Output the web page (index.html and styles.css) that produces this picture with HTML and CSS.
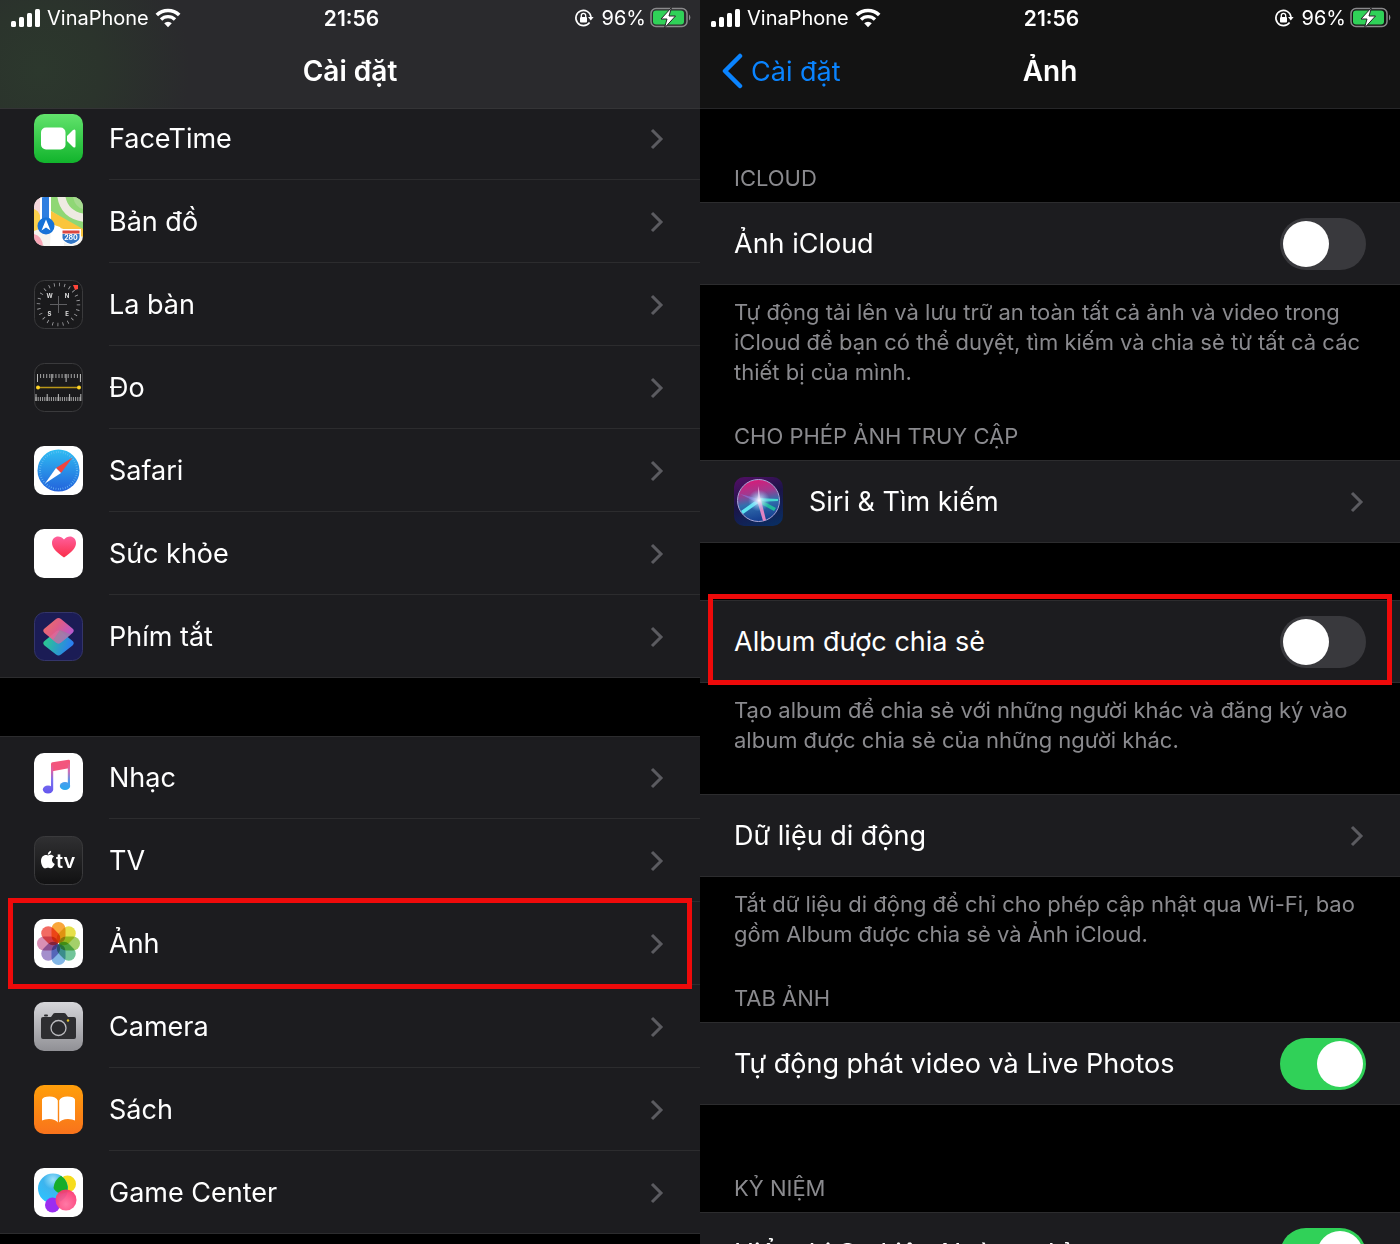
FILE: index.html
```html
<!DOCTYPE html>
<html lang="vi">
<head>
  <meta charset="UTF-8">
  <meta name="viewport" content="width=device-width, initial-scale=1.0">
  <title>Cài đặt - Ảnh</title>
  <link rel="stylesheet" href="styles.css">
</head>
<body>
  <!-- shared symbols -->
  <svg class="defs" width="0" height="0" aria-hidden="true">
    <symbol id="signal" viewBox="0 0 30 20">
      <rect x="0" y="13" width="5" height="6" rx="1.5" fill="#fff"/>
      <rect x="8" y="9" width="5" height="10" rx="1.5" fill="#fff"/>
      <rect x="16" y="5" width="5" height="14" rx="1.5" fill="#fff"/>
      <rect x="24" y="1" width="5" height="18" rx="1.5" fill="#fff"/>
    </symbol>
    <symbol id="wifi" viewBox="0 0 26 20">
      <path d="M1.8 7a16 16 0 0 1 22.4 0" fill="none" stroke="#fff" stroke-width="3.6"/>
      <path d="M6 11.500a10 10 0 0 1 14 0" fill="none" stroke="#fff" stroke-width="3.4"/>
      <path d="M13 19.200l-3.800-4a5.500 5.500 0 0 1 7.600 0z" fill="#fff"/>
    </symbol>
    <symbol id="lock" viewBox="0 0 20 20">
      <path d="M15.600 14.500A7.600 7.600 0 1 1 17 9" fill="none" stroke="#fff" stroke-width="1.6"/>
      <path d="M14 9h5.600l-2.800 3.600z" fill="#fff"/>
      <rect x="6" y="9" width="7" height="5.500" rx="1" fill="#fff"/>
      <path d="M7.300 9V7.500a2.200 2.200 0 0 1 4.400 0V9" fill="none" stroke="#fff" stroke-width="1.300"/>
    </symbol>
    <symbol id="battery" viewBox="0 0 42 22">
      <rect x="1" y="1.500" width="36" height="18" rx="5" fill="none" stroke="#8a8a8c" stroke-width="1.500"/>
      <rect x="3" y="3.500" width="31" height="14" rx="3" fill="#30d158"/>
      <path d="M39 7.500a4 4 0 0 1 0 6z" fill="#8a8a8c"/>
      <path d="M21.500.5l-10.500 11.500h6l-2.500 9 11-12h-6.500z" fill="#fff" stroke="#242426" stroke-width="1"/>
    </symbol>
    <symbol id="chevron" viewBox="0 0 14 22">
      <path d="M2 2l9 9-9 9" fill="none" stroke="#5b5b60" stroke-width="3"/>
    </symbol>
  </svg>

  <main class="screens">
    <section class="screen">
      <header class="topbar topbar-tinted">
        <div class="status">
          <div class="status-left">
            <svg class="signal"><use href="#signal"/></svg>
            <span>VinaPhone</span>
            <svg class="wifi"><use href="#wifi"/></svg>
          </div>
          <time class="clock">21:56</time>
          <div class="status-right">
            <svg class="lock"><use href="#lock"/></svg>
            <span>96%</span>
            <svg class="battery"><use href="#battery"/></svg>
          </div>
        </div>
        <div class="titlebar"><h1>Cài đặt</h1></div>
      </header>

      <nav class="settings">
        <ul class="group">
          <li><a class="row" href="#facetime">
            <svg class="icon" viewBox="0 0 49 49">
              <defs><linearGradient id="ft" x2="0" y2="1"><stop offset="0" stop-color="#62e36c"/><stop offset="1" stop-color="#11b42c"/></linearGradient></defs>
              <rect width="49" height="49" rx="10" fill="url(#ft)"/>
              <rect x="7" y="13.500" width="24.500" height="22" rx="5" fill="#fff"/>
              <path d="M33 22l6-6q2.500-1.500 2.500 1v15q0 2.500-2.500 1l-6-6z" fill="#fff"/>
            </svg>
            <span class="name">FaceTime</span><svg class="chevron"><use href="#chevron"/></svg></a></li>
          <li><a class="row" href="#maps">
            <svg class="icon" viewBox="0 0 49 49">
              <defs><clipPath id="r"><rect width="49" height="49" rx="10"/></clipPath></defs>
              <g clip-path="url(#r)">
                <rect width="49" height="49" fill="#f5f3ee"/>
                <path d="M0 0h8v24L0 14z" fill="#f4d7dc"/>
                <path d="M17 0h32v35L17 14z" fill="#8fd775"/>
                <path d="M17 14l32 18v8L17 27z" fill="#fac53c"/>
                <path d="M17 27l9 3 4 9v10H16z" fill="#fff"/>
                <path d="M0 12q8 3 8 19l-8 3z" fill="#fbd04c"/>
                <path d="M0 37q8 2 9 12H0z" fill="#f7a5b5"/>
                <path d="M27-3q2 21 24 24" fill="none" stroke="#eeeae2" stroke-width="8"/>
                <path d="M39 0h10v12Q41 10 39 0z" fill="#a6db8f"/>
                <path d="M6 0h11v30H6z" fill="#fff"/>
                <path d="M8 0h7v30H8z" fill="#2f7fe0"/>
                <circle cx="12" cy="29" r="8.500" fill="#1672d8"/>
                <path d="M12 22.500l4.500 11-4.500-3-4.500 3z" fill="#fff"/>
                <path d="M27 32h20v8q-1 6-10 8-9-2-10-8z" fill="#fff"/>
                <path d="M28.500 37h17v4q-1 4-8.500 6-7.500-2-8.500-6z" fill="#3276c5"/>
                <path d="M28.500 33.500h17v3h-17z" fill="#dc4740"/>
                <text x="37" y="43" class="shield">280</text>
              </g>
            </svg>
            <span class="name">Bản đồ</span><svg class="chevron"><use href="#chevron"/></svg></a></li>
          <li><a class="row" href="#compass">
            <svg class="icon" viewBox="0 0 49 49">
              <rect x=".5" y=".5" width="48" height="48" rx="10" fill="#1a1a1c" stroke="#3a3a3c"/>
              <circle cx="24.500" cy="24.500" r="20" fill="none" stroke="#a5a5a8" stroke-width="3.500" stroke-dasharray=".8 4.436"/>
              <path d="M24.500 16v17M16 24.500h17" stroke="#5f5f62"/>
              <path d="M39 5h5v4l-3 1z" fill="#ff453a"/>
              <g class="points"><text x="15.500" y="18">W</text><text x="33" y="18">N</text><text x="15.500" y="36">S</text><text x="33" y="36">E</text></g>
            </svg>
            <span class="name">La bàn</span><svg class="chevron"><use href="#chevron"/></svg></a></li>
          <li><a class="row" href="#measure">
            <svg class="icon" viewBox="0 0 49 49">
              <rect x=".5" y=".5" width="48" height="48" rx="10" fill="#1a1a1c" stroke="#3a3a3c"/>
              <path d="M3 13h44" stroke="#a5a5a5" stroke-width="4" stroke-dasharray="1 2.070"/>
              <path d="M3 15h44" stroke="#bbb" stroke-width="8" stroke-dasharray="1 13.300"/>
              <path d="M1.500 36h46" stroke="#a5a5a5" stroke-width="4" stroke-dasharray="1 1.200"/>
              <path d="M1.500 34.500h46" stroke="#bbb" stroke-width="7" stroke-dasharray="1 10.200"/>
              <path d="M4 24.500h41" stroke="#b99618" stroke-width="1.500"/>
              <circle cx="4" cy="24.500" r="2" fill="#ffd426"/><circle cx="45" cy="24.500" r="2" fill="#ffd426"/>
            </svg>
            <span class="name">Đo</span><svg class="chevron"><use href="#chevron"/></svg></a></li>
          <li><a class="row" href="#safari">
            <svg class="icon" viewBox="0 0 49 49">
              <defs><linearGradient id="sf" x2="0" y2="1"><stop offset="0" stop-color="#2fbdf2"/><stop offset="1" stop-color="#2362dc"/></linearGradient></defs>
              <rect width="49" height="49" rx="10" fill="#fff"/>
              <circle cx="24.500" cy="24.500" r="21" fill="url(#sf)"/>
              <circle cx="24.500" cy="24.500" r="18.500" fill="none" stroke="#6fc0f4" stroke-width="2" stroke-dasharray=".6 1.800"/>
              <path d="M38.500 11.500L22 22l5 5z" fill="#f0453f"/>
              <path d="M11 37.500L22 22l5 5z" fill="#fff"/>
            </svg>
            <span class="name">Safari</span><svg class="chevron"><use href="#chevron"/></svg></a></li>
          <li><a class="row" href="#health">
            <svg class="icon" viewBox="0 0 49 49">
              <defs><linearGradient id="hl" x2="0" y2="1"><stop offset="0" stop-color="#ff5f9c"/><stop offset="1" stop-color="#fa2e49"/></linearGradient></defs>
              <rect width="49" height="49" rx="10" fill="#fff"/>
              <path d="M30 28.500C22 23 18 19 18 14c0-7 8-8.500 12-3.500C34 5.500 42 7 42 14c0 5-4 9-12 14.500z" fill="url(#hl)"/>
            </svg>
            <span class="name">Sức khỏe</span><svg class="chevron"><use href="#chevron"/></svg></a></li>
          <li><a class="row" href="#shortcuts">
            <svg class="icon" viewBox="0 0 49 49">
              <defs>
                <linearGradient id="s1" x2="1" y2=".3"><stop offset="0" stop-color="#2bd480"/><stop offset="1" stop-color="#2b7ff0"/></linearGradient>
                <linearGradient id="s2" x2="1" y2=".6"><stop offset="0" stop-color="#ff7a62"/><stop offset=".5" stop-color="#f0618c"/><stop offset="1" stop-color="#c05ee0"/></linearGradient>
              </defs>
              <rect x=".5" y=".5" width="48" height="48" rx="10" fill="#1b1c55" stroke="#34356a"/>
              <path d="M22 19.500q2.500-2 5 0l11.500 9.500q2.500 2 0 4.500L27 42.500q-2.500 2-5 0L10.500 33.500q-2.500-2.500 0-4.500z" fill="url(#s1)"/>
              <path d="M22 7q2.500-2 5 0l11.500 9.500q2.500 2 0 4.500L27 30.500q-2.500 2-5 0L10.500 21q-2.500-2.500 0-4.500z" fill="url(#s2)" opacity=".92"/>
              <path d="M26 18l11 4.500-10 8q-2.500 2-5 0l-3-2.500z" fill="#8a8aa0" opacity=".6"/>
            </svg>
            <span class="name">Phím tắt</span><svg class="chevron"><use href="#chevron"/></svg></a></li>
        </ul>

        <ul class="group">
          <li><a class="row" href="#music">
            <svg class="icon" viewBox="0 0 49 49">
              <defs><linearGradient id="mu" gradientUnits="userSpaceOnUse" x1="24" y1="8" x2="24" y2="40"><stop offset="0" stop-color="#f8526e"/><stop offset=".3" stop-color="#dc62a8"/><stop offset=".6" stop-color="#7a70ef"/><stop offset="1" stop-color="#6557ee"/></linearGradient>
              <linearGradient id="mb" gradientUnits="userSpaceOnUse" x1="36" y1="8" x2="36" y2="37"><stop offset="0" stop-color="#f8526e"/><stop offset=".35" stop-color="#cf70b8"/><stop offset=".7" stop-color="#4d9cee"/><stop offset="1" stop-color="#28a9ee"/></linearGradient></defs>
              <rect width="49" height="49" rx="10" fill="#fff"/>
              <path d="M17 11q0-1.500 1.500-1.800l16-2.500q1.500-.2 1.500 1.300v7L17 18.500z" fill="#f3557d"/>
              <path d="M17 12h2.200v24H17z" fill="url(#mu)"/><path d="M33.800 8H36v25h-2.200z" fill="url(#mb)"/>
              <ellipse cx="14" cy="36.500" rx="5.200" ry="4" fill="url(#mu)"/>
              <ellipse cx="31" cy="33" rx="5.200" ry="4" fill="url(#mb)"/>
            </svg>
            <span class="name">Nhạc</span><svg class="chevron"><use href="#chevron"/></svg></a></li>
          <li><a class="row" href="#tv">
            <svg class="icon" viewBox="0 0 49 49">
              <defs><linearGradient id="tv" x2="0" y2="1"><stop offset="0" stop-color="#303032"/><stop offset="1" stop-color="#111112"/></linearGradient></defs>
              <rect x=".5" y=".5" width="48" height="48" rx="10" fill="url(#tv)" stroke="#3a3a3c"/>
              <path d="M14 19.500c2-1.200 4.600-.8 6 1-3 2-2.500 6 .8 7.500-1 2.600-2.600 4.300-4 4.300-1.200 0-1.600-.6-2.800-.6s-1.700.6-2.800.6C9 32.300 7 28.500 7 25c0-4.500 3.500-7 7-5.500z" fill="#fff"/>
              <path d="M13.800 18.700q0-3.200 3.300-4 .1 3.200-3.300 4z" fill="#fff"/>
              <text x="22" y="32" class="tv-text">tv</text>
            </svg>
            <span class="name">TV</span><svg class="chevron"><use href="#chevron"/></svg></a></li>
          <li class="marked"><a class="row" href="#photos">
            <svg class="icon" viewBox="0 0 49 49">
              <rect width="49" height="49" rx="10" fill="#fff"/>
              <g class="petals">
                <rect x="17.500" y="3" width="14" height="21" rx="7" fill="#f9a63a"/>
                <rect x="17.500" y="3" width="14" height="21" rx="7" fill="#e6e04a" transform="rotate(45 24.500 24.500)"/>
                <rect x="17.500" y="3" width="14" height="21" rx="7" fill="#a4d06a" transform="rotate(90 24.500 24.500)"/>
                <rect x="17.500" y="3" width="14" height="21" rx="7" fill="#72c59a" transform="rotate(135 24.500 24.500)"/>
                <rect x="17.500" y="3" width="14" height="21" rx="7" fill="#82b6e6" transform="rotate(180 24.500 24.500)"/>
                <rect x="17.500" y="3" width="14" height="21" rx="7" fill="#a48fcc" transform="rotate(225 24.500 24.500)"/>
                <rect x="17.500" y="3" width="14" height="21" rx="7" fill="#d98fb4" transform="rotate(270 24.500 24.500)"/>
                <rect x="17.500" y="3" width="14" height="21" rx="7" fill="#f26a62" transform="rotate(315 24.500 24.500)"/>
              </g>
            </svg>
            <span class="name">Ảnh</span><svg class="chevron"><use href="#chevron"/></svg></a></li>
          <li><a class="row" href="#camera">
            <svg class="icon" viewBox="0 0 49 49">
              <defs><linearGradient id="cm" x2="0" y2="1"><stop offset="0" stop-color="#d6d6da"/><stop offset="1" stop-color="#909095"/></linearGradient></defs>
              <rect width="49" height="49" rx="10" fill="url(#cm)"/>
              <path d="M7 17q0-2 2-2h8l2.500-3.500q.5-.5 1.500-.5h9q1 0 1.500.5L34 15h6q2 0 2 2v18q0 2-2 2H9q-2 0-2-2z" fill="#2e2e31"/>
              <rect x="10" y="12.500" width="4" height="2" rx="1" fill="#2e2e31"/>
              <circle cx="24.500" cy="26" r="7.500" fill="#29292c" stroke="#bcbcc0" stroke-width="1.300"/>
              <circle cx="34" cy="18.500" r="1.200" fill="#e7c324"/>
            </svg>
            <span class="name">Camera</span><svg class="chevron"><use href="#chevron"/></svg></a></li>
          <li><a class="row" href="#books">
            <svg class="icon" viewBox="0 0 49 49">
              <defs><linearGradient id="bk" x2="0" y2="1"><stop offset="0" stop-color="#ff9f0a"/><stop offset="1" stop-color="#f9731c"/></linearGradient></defs>
              <rect width="49" height="49" rx="10" fill="url(#bk)"/>
              <path d="M23.800 15.500Q22 11.500 15.500 11.500T8 14.500v21q2.500-1.500 7-1.500 6.500 0 8.800 3.500zM25.200 15.500q1.800-4 8.300-4t7.500 3v21q-2.500-1.500-7-1.500-6.500 0-8.800 3.500z" fill="#fff"/>
            </svg>
            <span class="name">Sách</span><svg class="chevron"><use href="#chevron"/></svg></a></li>
          <li><a class="row" href="#gamecenter">
            <svg class="icon" viewBox="0 0 49 49">
              <defs>
                <radialGradient id="g1" cx=".5" cy=".2" r=".8"><stop offset="0" stop-color="#9ce0f8"/><stop offset=".4" stop-color="#3db4ee"/><stop offset="1" stop-color="#2bc4ff"/></radialGradient>
                <radialGradient id="g2" cx=".5" cy=".7" r=".7"><stop offset="0" stop-color="#ff6f9f"/><stop offset="1" stop-color="#fb3470"/></radialGradient>
              </defs>
              <rect width="49" height="49" rx="10" fill="#fff"/>
              <circle cx="33.500" cy="16" r="8.500" fill="#f6dc1d"/>
              <circle cx="19" cy="20.500" r="15" fill="url(#g1)"/>
              <path d="M27 7.800a15 15 0 0 1 6.500 15.500A9 9 0 0 1 19.500 20 16 16 0 0 1 27 7.800z" fill="#16ad2a"/>
              <circle cx="18.500" cy="37" r="7.500" fill="#9a2df0"/>
              <circle cx="32" cy="32" r="10.500" fill="url(#g2)" opacity=".93"/>
            </svg>
            <span class="name">Game Center</span><svg class="chevron"><use href="#chevron"/></svg></a></li>
        </ul>
      </nav>
    </section>

    <section class="screen">
      <header class="topbar">
        <div class="status">
          <div class="status-left">
            <svg class="signal"><use href="#signal"/></svg>
            <span>VinaPhone</span>
            <svg class="wifi"><use href="#wifi"/></svg>
          </div>
          <time class="clock">21:56</time>
          <div class="status-right">
            <svg class="lock"><use href="#lock"/></svg>
            <span>96%</span>
            <svg class="battery"><use href="#battery"/></svg>
          </div>
        </div>
        <div class="titlebar">
          <a class="back" href="#settings">
            <svg class="back-arrow" viewBox="0 0 22 36"><path d="M19 3L4 18l15 15" fill="none" stroke="#0a84ff" stroke-width="4.500" stroke-linecap="round" stroke-linejoin="round"/></svg>
            Cài đặt
          </a>
          <h1>Ảnh</h1>
        </div>
      </header>

      <div class="block block-first">
        <h2>ICLOUD</h2>
        <div class="group">
          <label class="row"><span class="name">Ảnh iCloud</span><input class="switch" type="checkbox"></label>
        </div>
        <p>Tự động tải lên và lưu trữ an toàn tất cả ảnh và video trong iCloud để bạn có thể duyệt, tìm kiếm và chia sẻ từ tất cả các thiết bị của mình.</p>
      </div>

      <div class="block">
        <h2>CHO PHÉP ẢNH TRUY CẬP</h2>
        <div class="group">
          <a class="row" href="#siri">
            <svg class="icon" viewBox="0 0 49 49">
              <defs>
                <linearGradient id="sb" x1=".3" x2=".7" y2="1"><stop offset="0" stop-color="#4a0f60"/><stop offset=".45" stop-color="#1b1448"/><stop offset="1" stop-color="#0a2c60"/></linearGradient>
                <linearGradient id="so" x1=".4" x2=".6" y2="1"><stop offset="0" stop-color="#d81b78"/><stop offset=".3" stop-color="#a3388f"/><stop offset=".55" stop-color="#326fae"/><stop offset="1" stop-color="#123a8e"/></linearGradient>
                <radialGradient id="sg"><stop offset="0" stop-color="#fff"/><stop offset=".3" stop-color="#d8eaff" stop-opacity=".7"/><stop offset="1" stop-color="#7ac6ff" stop-opacity="0"/></radialGradient>
              </defs>
              <rect width="49" height="49" rx="10" fill="url(#sb)"/>
              <circle cx="24.500" cy="23.500" r="21" fill="url(#so)" stroke="#a9a5d6"/>
              <path d="M24 22L7 34l2 3 17-12z" fill="#5fe6f2"/>
              <path d="M24 21l20 1v2l-19 1z" fill="#45d8cf"/>
              <path d="M25 22l17 9-2 3-15-8z" fill="#20b89c"/>
              <path d="M23 23l6 21 3-1-5-20z" fill="#e183c2"/>
              <path d="M24.500 9l2 14h-3z" fill="#f5a5d8"/>
              <path d="M6 17l19 5-1 4z" fill="#8c74d8" opacity=".7"/>
              <circle cx="25" cy="23.500" r="11" fill="url(#sg)"/>
            </svg>
            <span class="name">Siri &amp; Tìm kiếm</span><svg class="chevron"><use href="#chevron"/></svg></a>
        </div>
      </div>

      <div class="block block-plain">
        <div class="group marked">
          <label class="row"><span class="name">Album được chia sẻ</span><input class="switch" type="checkbox"></label>
        </div>
        <p>Tạo album để chia sẻ với những người khác và đăng ký vào album được chia sẻ của những người khác.</p>
      </div>

      <div class="block block-near">
        <div class="group">
          <a class="row" href="#data"><span class="name">Dữ liệu di động</span><svg class="chevron"><use href="#chevron"/></svg></a>
        </div>
        <p>Tắt dữ liệu di động để chỉ cho phép cập nhật qua Wi-Fi, bao gồm Album được chia sẻ và Ảnh iCloud.</p>
      </div>

      <div class="block">
        <h2>TAB ẢNH</h2>
        <div class="group">
          <label class="row"><span class="name">Tự động phát video và Live Photos</span><input class="switch" type="checkbox" checked></label>
        </div>
      </div>

      <div class="block block-far">
        <h2>KỶ NIỆM</h2>
        <div class="group">
          <label class="row"><span class="name">Hiển thị Sự kiện Ngày nghỉ</span><input class="switch" type="checkbox" checked></label>
        </div>
      </div>
    </section>
  </main>
</body>
</html>
```
FILE: styles.css
```css
* {
  box-sizing: border-box;
}
body {
  margin: 0;
  background-color: #000;
  color: #fff;
  font-family: Inter, "Liberation Sans", sans-serif;
  font-size: 27px;
}
a {
  color: inherit;
  text-decoration: none;
}
svg {
  display: block;
  flex: none;
}
.defs {
  position: absolute;
}
.screens {
  display: flex;
  height: 100vh;
  overflow: hidden;
}
.screen {
  flex: 1;
  min-width: 0;
}

/* header */
.topbar {
  position: relative;
  z-index: 1;
  height: 109px;
  background-color: #131313;
  border-bottom: 1px solid #262628;
}
.topbar-tinted {
  background: #2a2a2d radial-gradient(circle at 40px 70px, #2c382d 0, #2b342c 60px, #2a2a2d 150px);
  border-bottom-color: #343436;
}
.status {
  display: grid;
  grid-template-columns: 1fr auto 1fr;
  align-items: center;
  height: 36px;
  padding: 0 8px 0 11px;
  font-size: 20px;
}
.status-left,
.status-right {
  display: flex;
  align-items: center;
  gap: 6px;
}
.status-right {
  justify-content: flex-end;
  gap: 4px;
}
.clock {
  font-size: 21px;
  font-weight: 600;
}
.signal {
  width: 30px;
  height: 20px;
}
.wifi {
  width: 26px;
  height: 20px;
}
.lock {
  width: 20px;
  height: 20px;
  margin-right: 4px;
}
.battery {
  width: 42px;
  height: 22px;
}
.titlebar {
  display: grid;
  grid-template-columns: 1fr auto 1fr;
  align-items: center;
  height: 70px;
  padding: 0 21px;
}
h1 {
  grid-column: 2;
  margin: 0;
  font-size: 28px;
  font-weight: 600;
}
.back {
  display: flex;
  align-items: center;
  gap: 8px;
  color: #0a84ff;
}
.back-arrow {
  width: 22px;
  height: 36px;
}

/* lists */
.settings {
  margin-top: -12px;
}
.group {
  list-style: none;
  margin: 0;
  padding: 0;
  background-color: #1c1c1f;
}
.group + .group {
  margin-top: 58px;
}
.row {
  display: flex;
  align-items: center;
  height: 83px;
  padding: 0 34px;
}
.name {
  flex: 1;
}
.settings li {
  background: linear-gradient(#2c2c2e, #2c2c2e) 109px 100% / 100% 1px no-repeat;
}
.settings li:last-child {
  background-position: 0 100%;
}
.settings .group + .group {
  box-shadow: inset 0 1px #2c2c2e;
}
.icon {
  width: 49px;
  height: 49px;
  margin-right: 26px;
}
.chevron {
  width: 14px;
  height: 22px;
  margin-right: 2px;
}
.marked {
  position: relative;
}
.marked::after {
  content: "";
  position: absolute;
  inset: -4px 8px;
  border: 5px solid #ee0a0a;
  pointer-events: none;
}

/* photo options */
.block {
  margin-top: 34px;
}
.block-first {
  margin-top: 54px;
}
.block-plain {
  margin-top: 57px;
}
.block-near {
  margin-top: 39px;
}
.block-far {
  margin-top: 68px;
}
.block .group {
  border-top: 1px solid #2c2c2e;
  border-bottom: 1px solid #2c2c2e;
}
.block .row {
  height: 81px;
}
.block .marked::after {
  inset: -7px 8px -3px;
}
h2 {
  margin: 0;
  padding: 0 34px 9px;
  color: #8a8a8e;
  font-size: 22px;
  font-weight: 400;
  line-height: 30px;
}
p {
  margin: 0;
  padding: 12px 34px 0;
  color: #8a8a8e;
  font-size: 22px;
  line-height: 30px;
}
.switch {
  appearance: none;
  width: 86px;
  height: 52px;
  margin: 0;
  padding: 3px;
  border-radius: 26px;
  background-color: #39393d;
}
.switch::before {
  content: "";
  display: block;
  width: 46px;
  height: 46px;
  border-radius: 50%;
  background-color: #fff;
}
.switch:checked {
  background-color: #30d158;
}
.switch:checked::before {
  margin-left: auto;
}

/* lettering inside the app icons */
.shield {
  fill: #fff;
  font-size: 7px;
  font-weight: 700;
  text-anchor: middle;
}
.points {
  fill: #ddd;
  font-size: 6px;
  font-weight: 700;
  text-anchor: middle;
}
.tv-text {
  fill: #fff;
  font-size: 20px;
  font-weight: 600;
}
.petals {
  isolation: isolate;
}
.petals rect {
  mix-blend-mode: multiply;
}
```
